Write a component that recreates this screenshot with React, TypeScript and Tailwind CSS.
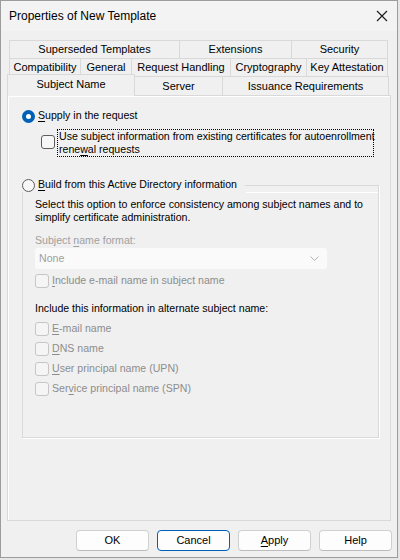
import type { ReactNode } from 'react';

function Radio({ checked }: { checked?: boolean }) {
  if (checked) {
    return (
      <span className="flex h-[13px] w-[13px] shrink-0 items-center justify-center rounded-full bg-[#005fb8]">
        <span className="block h-[5px] w-[5px] rounded-full bg-white" />
      </span>
    );
  }
  return <span className="block h-[13px] w-[13px] shrink-0 rounded-full border border-[#5d5d5d] bg-[#f7f7f7]" />;
}

function Checkbox({ disabled }: { disabled?: boolean }) {
  return (
    <span
      className={
        disabled
          ? 'block h-[14px] w-[14px] shrink-0 rounded-[3px] border border-[#c6c6c6] bg-[#f5f5f5]'
          : 'block h-[14px] w-[14px] shrink-0 rounded-[3px] border border-[#5d5d5d] bg-[#f7f7f7]'
      }
    />
  );
}

function Key({ children }: { children: ReactNode }) {
  return <span className="underline underline-offset-[2px]">{children}</span>;
}

function DisabledOption({ children }: { children: ReactNode }) {
  return (
    <div className="flex h-[14px] items-center gap-[3px] text-[#8d8d8d]">
      <Checkbox disabled />
      <span>{children}</span>
    </div>
  );
}

function Tab({ label, className }: { label: string; className: string }) {
  return (
    <div className={`flex items-center justify-center border-l border-t border-[#d9d9d9] ${className}`}>
      {label}
    </div>
  );
}

function Button({ children, focused }: { children: ReactNode; focused?: boolean }) {
  return (
    <button
      className={
        focused
          ? 'flex h-[21px] w-[73px] items-center justify-center rounded-[4px] border border-[#005fb8] bg-[#fdfdfd]'
          : 'flex h-[21px] w-[73px] items-center justify-center rounded-[4px] border border-[#d0d0d0] border-b-[#bcbcbc] bg-[#fdfdfd]'
      }
    >
      {children}
    </button>
  );
}

export default function App() {
  return (
    <div className="h-[560px] w-[400px] bg-[#e6e6e6] font-['Liberation_Sans',Arial,sans-serif] text-[10.6px] text-black">
      <div className="flex h-[558px] w-[398px] flex-col border border-[#9c9c9c] bg-[#f0f0f0]">
        {/* title bar */}
        <div className="flex h-[30px] items-center justify-between bg-[#f3f3f3] pl-[8px] pr-[8px]">
          <span className="text-[12px]">Properties of New Template</span>
          <svg width="12" height="12" viewBox="0 0 12 12" className="mr-[1px]">
            <path d="M1 1 L11 11 M11 1 L1 11" stroke="#1a1a1a" strokeWidth="1.1" />
          </svg>
        </div>

        {/* tabs */}
        <div className="mt-[9px] flex h-[18px] pl-[8px] text-[11px]">
          <Tab label="Superseded Templates" className="w-[170px]" />
          <Tab label="Extensions" className="w-[112px]" />
          <Tab label="Security" className="w-[97px] border-r" />
        </div>
        <div className="flex h-[18px] pl-[8px] text-[11px]">
          <Tab label="Compatibility" className="w-[71px]" />
          <Tab label="General" className="w-[51px]" />
          <Tab label="Request Handling" className="w-[99px]" />
          <Tab label="Cryptography" className="w-[76px]" />
          <Tab label="Key Attestation" className="w-[82px] border-r" />
        </div>
        <div className="flex h-[19px] items-end pl-[6px] text-[11px]">
          <div className="relative z-10 -mb-[1px] flex h-[22px] w-[128px] items-center justify-center border-x border-t border-[#d9d9d9] bg-[#f0f0f0] pb-[2px]">
            Subject Name
          </div>
          <Tab label="Server" className="h-[19px] w-[87px] border-l-0" />
          <Tab label="Issuance Requirements" className="h-[19px] w-[167px] border-r" />
        </div>

        {/* page */}
        <div className="ml-[6px] flex h-[426px] w-[384px] flex-col border border-[#d9d9d9] pl-[14px] pr-[11px] pt-[13px] shadow-[inset_1px_1px_0_#fff]">
          <div className="flex h-[14px] items-center gap-[3px]">
            <Radio checked />
            <span>
              <Key>S</Key>upply in the request
            </span>
          </div>

          <div className="ml-[19px] mt-[6px] flex gap-[2px]">
            <span className="mt-[6px] block">
              <Checkbox />
            </span>
            <div className="w-[317px] whitespace-nowrap border border-dotted border-black pl-[1px] leading-[13px]">
              Use subject information from existing certificates for autoenrollment
              <br />
              rene<Key>w</Key>al requests
            </div>
          </div>

          <div className="mt-[21px] flex h-[14px] items-center">
            <Radio />
            <span className="ml-[3px]">
              <Key>B</Key>uild from this Active Directory information
            </span>
            <div className="ml-[8px] h-[7px] flex-1 self-end border-r border-t border-[#d9d9d9] shadow-[1px_1px_0_#fff]" />
          </div>

          <div className="flex h-[246px] flex-col border-x border-b border-[#d9d9d9] pl-[12px] pt-[6px] shadow-[1px_1px_0_#fff]">
            <p className="leading-[13px]">
              Select this option to enforce consistency among subject names and to
              <br />
              simplify certificate administration.
            </p>
            <p className="mt-[10px] leading-[13px] text-[#a0a0a0]">
              Subject <Key>n</Key>ame format:
            </p>
            <div className="mt-[1px] flex h-[21px] w-[292px] items-center justify-between rounded-[3px] bg-[#fafafa] pl-[4px] pr-[8px] text-[#a0a0a0]">
              <span>None</span>
              <svg width="9" height="5" viewBox="0 0 9 5">
                <path d="M0.5 0.5 L4.5 4.5 L8.5 0.5" fill="none" stroke="#b5b5b5" strokeWidth="1" />
              </svg>
            </div>
            <div className="mt-[5px]">
              <DisabledOption>
                <Key>I</Key>nclude e-mail name in subject name
              </DisabledOption>
            </div>
            <p className="mt-[14px] leading-[13px]">Include this information in alternate subject name:</p>
            <div className="mt-[7px] flex flex-col gap-[6px]">
              <DisabledOption>
                <Key>E</Key>-mail name
              </DisabledOption>
              <DisabledOption>
                <Key>D</Key>NS name
              </DisabledOption>
              <DisabledOption>
                <Key>U</Key>ser principal name (UPN)
              </DisabledOption>
              <DisabledOption>
                Ser<Key>v</Key>ice principal name (SPN)
              </DisabledOption>
            </div>
          </div>
        </div>

        {/* buttons */}
        <div className="ml-[6px] mt-[9px] flex w-[385px] justify-end gap-[8px] text-[11px]">
          <Button>OK</Button>
          <Button focused>Cancel</Button>
          <Button>
            <Key>A</Key>pply
          </Button>
          <Button>Help</Button>
        </div>
      </div>
    </div>
  );
}
